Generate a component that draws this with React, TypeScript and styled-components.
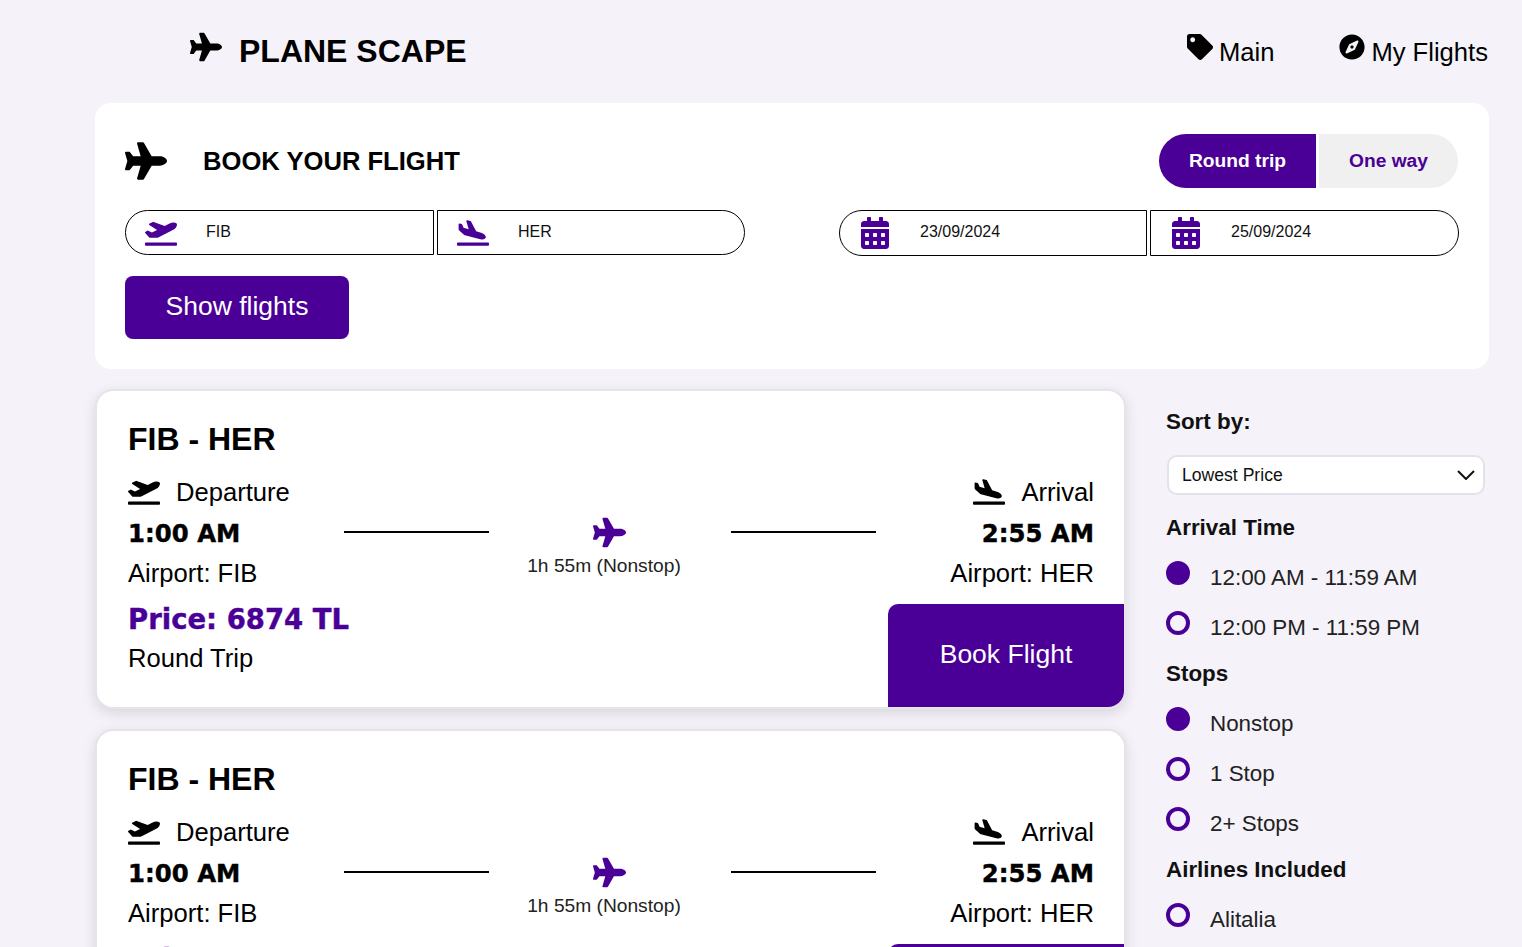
import { createGlobalStyle, styled } from "styled-components";
import { ReactNode } from "react";
import {
  FaPlane,
  FaPlaneDeparture,
  FaPlaneArrival,
  FaTag,
  FaCompass,
  FaCalendarAlt,
} from "react-icons/fa";

const PURPLE = "#4a0097";

const GlobalStyle = createGlobalStyle`
  html, body {
    margin: 0;
    padding: 0;
    background: #f5f3f9;
    overflow-x: hidden;
    scrollbar-width: none;
    color: #000;
    font-family: "Liberation Sans", Arial, sans-serif;
  }
  * { box-sizing: border-box; }
`;

const Page = styled.div`
  width: 1522px;
`;

const Header = styled.header`
  height: 103px;
  display: flex;
  justify-content: space-between;
  align-items: flex-start;
  padding: 33px 34px 0 190px;
`;

const Logo = styled.div`
  display: flex;
  align-items: center;
  gap: 17px;
  font-size: 32px;
  font-weight: 700;
  line-height: 37px;
  svg {
    font-size: 32px;
    margin-top: -9px;
  }
`;

const Nav = styled.nav`
  display: flex;
  gap: 65px;
  padding-top: 4px;
`;

const NavLink = styled.a`
  display: flex;
  align-items: flex-start;
  gap: 6px;
  font-size: 25.6px;
  line-height: 30px;
  svg {
    font-size: 26px;
    margin-top: -3px;
  }
`;

const Panel = styled.section`
  margin-left: 95px;
  width: 1394px;
  height: 266px;
  background: #fff;
  border-radius: 16px;
  padding: 31px 30px 30px 30px;
`;

const PanelTop = styled.div`
  display: flex;
  justify-content: space-between;
  align-items: center;
  height: 54px;
`;

const PanelTitle = styled.h2`
  margin: 0;
  display: flex;
  align-items: center;
  gap: 36px;
  font-size: 25.6px;
  font-weight: 700;
  svg {
    font-size: 42px;
  }
`;

const TripToggle = styled.div`
  display: flex;
  gap: 3px;
  margin-right: 1px;
`;

const TripButton = styled.button<{ $active?: boolean; $side: "left" | "right" }>`
  height: 54px;
  width: ${(p) => (p.$side === "left" ? "157px" : "139px")};
  border: 0;
  font-family: inherit;
  font-size: 19.2px;
  font-weight: 700;
  background: ${(p) => (p.$active ? PURPLE : "#f0f0f0")};
  color: ${(p) => (p.$active ? "#fff" : PURPLE)};
  border-radius: ${(p) => (p.$side === "left" ? "27px 0 0 27px" : "0 27px 27px 0")};
`;

const InputsRow = styled.div`
  display: flex;
  justify-content: space-between;
  margin-top: 22px;
`;

const InputPair = styled.div`
  display: flex;
  gap: 3px;
`;

const Field = styled.div<{ $side: "left" | "right"; $tall?: boolean }>`
  width: ${(p) => ((p.$side === "left") === !!p.$tall ? "308px" : "309px")};
  height: ${(p) => (p.$tall ? "46px" : "45px")};
  display: flex;
  align-items: center;
  gap: 29px;
  padding-left: 19px;
  padding-bottom: 2px;
  font-size: 16px;
  background: #fff;
  border: 1px solid #000;
  border-radius: ${(p) => (p.$side === "left" ? "24px 0 0 24px" : "0 24px 24px 0")};
  color: #111;
  svg {
    flex: none;
    color: ${PURPLE};
    font-size: 32px;
    margin-top: 2px;
  }
`;

const ShowFlights = styled.button`
  display: block;
  margin-top: 20px;
  width: 224px;
  height: 63px;
  padding: 0 0 2px;
  border: 0;
  border-radius: 8px;
  background: ${PURPLE};
  color: #fff;
  font-family: inherit;
  font-size: 26.5px;
`;

const Content = styled.div`
  display: flex;
  margin: 20px 0 0 95px;
  gap: 40px;
  align-items: flex-start;
`;

const Results = styled.main`
  width: 1031px;
  display: flex;
  flex-direction: column;
  gap: 20px;
`;

const Card = styled.article`
  height: 320px;
  background: #fff;
  border: 2px solid #e6e4ea;
  border-radius: 18px;
  box-shadow: 0 4px 14px rgba(0, 0, 0, 0.12);
  padding-top: 30px;
  display: flex;
  flex-direction: column;
  overflow: hidden;
`;

const CardTitle = styled.h3`
  margin: 0;
  padding-left: 31px;
  font-size: 32px;
  line-height: 37px;
  font-weight: 700;
`;

const Route = styled.div`
  display: flex;
  padding-left: 31px;
  margin-top: 19px;
`;

const Stop = styled.div<{ $right?: boolean }>`
  width: ${(p) => (p.$right ? "218px" : "216px")};
  flex: none;
  display: flex;
  flex-direction: column;
  align-items: ${(p) => (p.$right ? "flex-end" : "flex-start")};
`;

const StopLabel = styled.div`
  display: flex;
  align-items: center;
  gap: 16px;
  height: 30px;
  font-size: 25.6px;
  svg {
    font-size: 32px;
  }
`;

const StopTime = styled.div`
  margin-top: 12px;
  font-family: "DejaVu Sans", sans-serif;
  font-size: 24.4px;
  line-height: 30px;
  font-weight: 700;
  -webkit-text-stroke: 0.4px #000;
`;

const StopAirport = styled.div`
  margin-top: 9px;
  font-size: 25.6px;
  line-height: 30px;
`;

const Line = styled.div`
  flex: none;
  width: 145px;
  height: 2px;
  background: #000;
  margin-top: 54px;
`;

const Middle = styled.div`
  flex: none;
  width: 242px;
  display: flex;
  flex-direction: column;
  align-items: center;
  padding: 39px 12px 0 0;
  font-size: 19.2px;
  line-height: 22px;
  color: #222;
  svg {
    font-size: 33px;
    color: ${PURPLE};
    margin: 0 0 6px 10px;
  }
`;

const CardFooter = styled.div`
  flex: 1;
  display: flex;
  justify-content: space-between;
  align-items: flex-end;
  padding-left: 31px;
`;

const PriceBlock = styled.div`
  padding-bottom: 34px;
`;

const Price = styled.div`
  font-family: "DejaVu Sans", sans-serif;
  font-size: 27.5px;
  line-height: 33px;
  font-weight: 700;
  color: ${PURPLE};
  -webkit-text-stroke: 0.4px ${PURPLE};
`;

const TripType = styled.div`
  margin-top: 7px;
  font-size: 25.6px;
  line-height: 30px;
`;

const BookButton = styled.button`
  width: 236px;
  height: 103px;
  padding: 0 0 2px;
  border: 0;
  border-radius: 10px 0 10px 0;
  background: ${PURPLE};
  color: #fff;
  font-family: inherit;
  font-size: 26.5px;
`;

const Sidebar = styled.aside`
  width: 320px;
  padding-top: 20px;
`;

const SideHeading = styled.h4`
  margin: 0;
  font-size: 22.4px;
  line-height: 26px;
  font-weight: 700;
  color: #111;
`;

const SelectWrap = styled.div`
  position: relative;
  margin: 20px 0 20px 1px;
  width: 318px;
  svg {
    position: absolute;
    right: 10px;
    top: 15px;
    pointer-events: none;
  }
`;

const SortSelect = styled.select`
  appearance: none;
  width: 100%;
  height: 40px;
  padding: 0 13px;
  background: #fff;
  border: 2px solid #e4e2e8;
  border-radius: 10px;
  font-family: inherit;
  font-size: 17.6px;
  color: #111;
`;

const Option = styled.label`
  display: flex;
  align-items: flex-start;
  gap: 20px;
  height: 50px;
  font-size: 22.4px;
  color: #222;
  &:first-of-type {
    margin-top: 22px;
  }
`;

const Dot = styled.span<{ $checked?: boolean }>`
  flex: none;
  width: 24px;
  height: 24px;
  margin-top: -2px;
  border-radius: 50%;
  border: 4px solid ${PURPLE};
  background: ${(p) => (p.$checked ? PURPLE : "transparent")};
`;

const OptionText = styled.span`
  line-height: 26px;
  margin-top: 2px;
`;

const Group = styled.div`
  margin-bottom: -2px;
`;

function FilterGroup({ title, children }: { title: string; children: ReactNode }) {
  return (
    <Group>
      <SideHeading>{title}</SideHeading>
      {children}
    </Group>
  );
}

function FilterOption({ label, checked }: { label: string; checked?: boolean }) {
  return (
    <Option>
      <Dot $checked={checked} />
      <OptionText>{label}</OptionText>
    </Option>
  );
}

function FlightCard() {
  return (
    <Card>
      <CardTitle>FIB - HER</CardTitle>
      <Route>
        <Stop>
          <StopLabel>
            <FaPlaneDeparture />
            Departure
          </StopLabel>
          <StopTime>1:00 AM</StopTime>
          <StopAirport>Airport: FIB</StopAirport>
        </Stop>
        <Line />
        <Middle>
          <FaPlane />
          1h 55m (Nonstop)
        </Middle>
        <Line />
        <Stop $right>
          <StopLabel>
            <FaPlaneArrival />
            Arrival
          </StopLabel>
          <StopTime>2:55 AM</StopTime>
          <StopAirport>Airport: HER</StopAirport>
        </Stop>
      </Route>
      <CardFooter>
        <PriceBlock>
          <Price>Price: 6874 TL</Price>
          <TripType>Round Trip</TripType>
        </PriceBlock>
        <BookButton>Book Flight</BookButton>
      </CardFooter>
    </Card>
  );
}

export default function App() {
  return (
    <Page>
      <GlobalStyle />
      <Header>
        <Logo>
          <FaPlane />
          PLANE SCAPE
        </Logo>
        <Nav>
          <NavLink>
            <FaTag />
            Main
          </NavLink>
          <NavLink>
            <FaCompass />
            My Flights
          </NavLink>
        </Nav>
      </Header>
      <Panel>
        <PanelTop>
          <PanelTitle>
            <FaPlane />
            BOOK YOUR FLIGHT
          </PanelTitle>
          <TripToggle>
            <TripButton $active $side="left">Round trip</TripButton>
            <TripButton $side="right">One way</TripButton>
          </TripToggle>
        </PanelTop>
        <InputsRow>
          <InputPair>
            <Field $side="left">
              <FaPlaneDeparture />
              FIB
            </Field>
            <Field $side="right">
              <FaPlaneArrival />
              HER
            </Field>
          </InputPair>
          <InputPair>
            <Field $side="left" $tall>
              <FaCalendarAlt />
              23/09/2024
            </Field>
            <Field $side="right" $tall>
              <FaCalendarAlt />
              25/09/2024
            </Field>
          </InputPair>
        </InputsRow>
        <ShowFlights>Show flights</ShowFlights>
      </Panel>
      <Content>
        <Results>
          <FlightCard />
          <FlightCard />
        </Results>
        <Sidebar>
          <SideHeading>Sort by:</SideHeading>
          <SelectWrap>
            <SortSelect defaultValue="low">
              <option value="low">Lowest Price</option>
            </SortSelect>
            <svg width="18" height="10" viewBox="0 0 18 10" fill="none" stroke="#111" strokeWidth="2">
              <polyline points="1,1 9,9 17,1" />
            </svg>
          </SelectWrap>
          <FilterGroup title="Arrival Time">
            <FilterOption label="12:00 AM - 11:59 AM" checked />
            <FilterOption label="12:00 PM - 11:59 PM" />
          </FilterGroup>
          <FilterGroup title="Stops">
            <FilterOption label="Nonstop" checked />
            <FilterOption label="1 Stop" />
            <FilterOption label="2+ Stops" />
          </FilterGroup>
          <FilterGroup title="Airlines Included">
            <FilterOption label="Alitalia" />
          </FilterGroup>
        </Sidebar>
      </Content>
    </Page>
  );
}
